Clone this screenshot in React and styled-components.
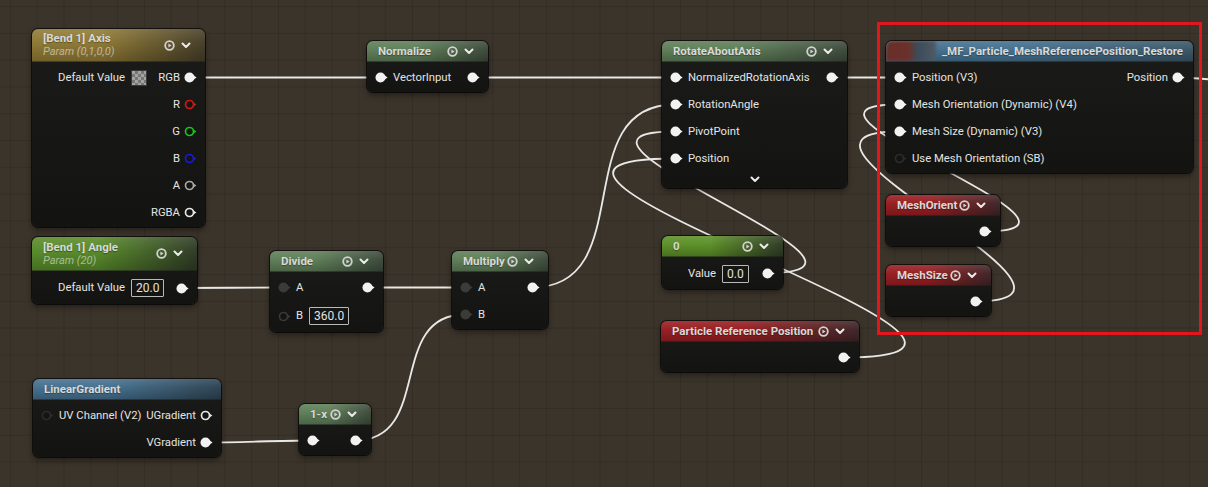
import React from 'react';
import styled, { createGlobalStyle } from 'styled-components';

const GlobalStyle = createGlobalStyle`
  html, body { margin: 0; padding: 0; background: #3b342b; }
  body { font-family: Roboto, "Noto Sans", "Liberation Sans", sans-serif; overflow: hidden; }
`;

const tones = {
  gold: ['#8e7934', '#453d27'],
  param: ['#578a29', '#2e3a25'],
  blue: ['#45708f', '#2d4352'],
  math: ['#5e7e58', '#3d4a3b'],
  constant: ['#5b8f27', '#2f3b24'],
  red: ['#981d21', '#3e2527'],
  mf: ['#44708f', '#3a5668'],
};

const Canvas = styled.div`
  position: relative;
  width: 1208px;
  height: 487px;
  overflow: hidden;
  background-color: #3b342b;
  background-image:
    linear-gradient(to right, rgba(0, 0, 0, 0.12) 1px, transparent 1px),
    linear-gradient(to bottom, rgba(0, 0, 0, 0.12) 1px, transparent 1px);
  background-size: 26.8px 26.8px;
  background-position: 10px 6px;
`;

const WireLayer = styled.svg`
  position: absolute;
  left: 0;
  top: 0;
  width: 1208px;
  height: 487px;
  z-index: 0;
`;

const Node = styled.div`
  position: absolute;
  left: ${(p) => p.$x}px;
  top: ${(p) => p.$y}px;
  width: ${(p) => p.$w}px;
  z-index: 1;
  border-radius: 6px;
  background: linear-gradient(180deg, #1b1b19 0%, #131311 100%);
  box-shadow: 0 0 0 1px rgba(0, 0, 0, 0.65), 0 3px 6px rgba(0, 0, 0, 0.45);
`;

const Header = styled.div`
  display: flex;
  align-items: center;
  gap: 6px;
  box-sizing: border-box;
  height: ${(p) => p.$h || 21}px;
  padding: 0 14px 0 ${(p) => (p.$flush ? 0 : 11)}px;
  border-radius: 6px 6px 0 0;
  overflow: hidden;
  border-bottom: 1px solid rgba(0, 0, 0, 0.55);
  background:
    linear-gradient(180deg, rgba(255, 255, 255, 0.12) 0%, rgba(255, 255, 255, 0.02) 40%, rgba(0, 0, 0, 0.2) 100%),
    linear-gradient(90deg, ${(p) => tones[p.$tone][0]} 0%, ${(p) => tones[p.$tone][0]} 40%, ${(p) => tones[p.$tone][1]} 100%);
`;

const TitleBlock = styled.div`
  flex: 1;
  min-width: 0;
  display: flex;
  flex-direction: column;
`;

const Title = styled.div`
  font-size: 11.5px;
  font-weight: 700;
  line-height: 14px;
  color: #d9d9d6;
  white-space: nowrap;
  text-shadow: 0 1px 1px rgba(0, 0, 0, 0.35);
`;

const Subtitle = styled.div`
  font-size: 11px;
  font-style: italic;
  line-height: 14px;
  color: rgba(255, 255, 255, 0.5);
  white-space: nowrap;
`;

const Thumb = styled.div`
  width: 50px;
  height: 20px;
  flex: none;
  border-radius: 6px 0 0 0;
  background: linear-gradient(90deg, #6a2e28 0%, #6c302a 45%, #3c4b58 62%, #4e5a66 100%);
  filter: blur(1.5px);
`;

const Icons = styled.div`
  display: flex;
  align-items: center;
  gap: 6px;
  flex: none;
`;

const Body = styled.div`
  padding: 2px 0 1px;
`;

const Row = styled.div`
  display: flex;
  align-items: center;
  height: ${(p) => p.$h || 27}px;
  padding: 0 8px 0 8px;
`;

const InSide = styled.div`
  display: flex;
  align-items: center;
  gap: 5px;
`;

const OutSide = styled.div`
  display: flex;
  align-items: center;
  gap: 4px;
  margin-left: auto;
`;

const Label = styled.span`
  font-size: 11.3px;
  line-height: 1;
  color: #e4e4e2;
  white-space: nowrap;
`;

const ValueBox = styled.span`
  display: inline-flex;
  align-items: center;
  height: 16px;
  padding: 0 4px;
  margin-left: 1px;
  border: 1px solid #b9b9b6;
  border-radius: 1px;
  font-size: 12px;
  color: #e2e2e0;
`;

const Checker = styled.span`
  display: inline-block;
  width: 14px;
  height: 14px;
  margin-left: 1px;
  border: 1px solid #3a3a3a;
  background-color: #a3a3a3;
  background-image:
    linear-gradient(45deg, #777 25%, transparent 25%, transparent 75%, #777 75%),
    linear-gradient(45deg, #777 25%, transparent 25%, transparent 75%, #777 75%);
  background-size: 6px 6px;
  background-position: 0 0, 3px 3px;
`;

const Footer = styled.div`
  display: flex;
  align-items: center;
  justify-content: center;
  height: 15px;
`;

const Highlight = styled.div`
  position: absolute;
  left: 877px;
  top: 22px;
  width: 325px;
  height: 313px;
  box-sizing: border-box;
  border: 3px solid #e2161c;
  z-index: 2;
  pointer-events: none;
`;

const Pin = ({ kind = 'filled', color = '#f2f2f2' }) => {
  if (kind === 'ghost') return <svg width="13" height="11" />;
  if (kind === 'filled' || kind === 'dim') {
    const c = kind === 'dim' ? '#3b3b3a' : color;
    return (
      <svg width="13" height="11" viewBox="0 0 13 11">
        <circle cx="5.5" cy="5.5" r="5" fill={c} />
        <polygon points="9,3 12.6,5.5 9,8" fill={c} />
      </svg>
    );
  }
  return (
    <svg width="13" height="11" viewBox="0 0 13 11">
      <circle cx="5.5" cy="5.5" r="4" fill="#141412" stroke={color} strokeWidth="1.7" />
      <polygon points="9.2,3.2 12.4,5.5 9.2,7.8" fill={color} />
    </svg>
  );
};

const PlayIcon = () => (
  <svg width="11" height="11" viewBox="0 0 11 11">
    <circle cx="5.5" cy="5.5" r="4.3" fill="none" stroke="#d2d2d0" strokeWidth="1.8" />
    <polygon points="4.4,3.5 7.6,5.5 4.4,7.5" fill="#d2d2d0" />
  </svg>
);

const Chevron = () => (
  <svg width="10" height="7" viewBox="0 0 10 7">
    <polyline points="1.5,1.5 5,5 8.5,1.5" fill="none" stroke="#ebebe9" strokeWidth="2" strokeLinecap="round" strokeLinejoin="round" />
  </svg>
);

const HeaderIcons = () => (
  <Icons>
    <PlayIcon />
    <Chevron />
  </Icons>
);

function wirePath([sx, sy], [ex, ey]) {
  const dx = ex - sx;
  const dy = ey - sy;
  const fwd = dx >= 0;
  const t = fwd
    ? Math.min(Math.abs(dx), 1000) + Math.min(Math.abs(dy), 1000)
    : Math.min(Math.abs(dx), 200) * 3 + Math.min(Math.abs(dy), 200) * 1.5;
  const c = t / 3;
  return `M${sx},${sy} C${sx + c},${sy} ${ex - c},${ey} ${ex},${ey}`;
}

const wires = [
  [[189, 77.5], [380, 77.5]],
  [[472, 77.5], [675, 77.5]],
  [[831, 77.5], [899, 77.5]],
  [[1177, 77.5], [1250, 82]],
  [[181, 288], [283, 287.5]],
  [[367, 287.5], [465, 287.5]],
  [[532, 287.5], [675, 104.5]],
  [[205, 442.5], [312, 440.5]],
  [[355, 440.5], [465, 314.5]],
  [[767, 273], [675, 131.5]],
  [[843, 357.5], [675, 158.5]],
  [[984, 231.5], [899, 104.5]],
  [[975, 301.5], [899, 131.5]],
];

export default function App() {
  return (
    <>
      <GlobalStyle />
      <Canvas>
        <WireLayer viewBox="0 0 1208 487">
          {wires.map((w, i) => (
            <path key={i} d={wirePath(w[0], w[1])} fill="none" stroke="#e8e8e6" strokeWidth="1.8" />
          ))}
        </WireLayer>

        {/* [Bend 1] Axis */}
        <Node $x={32} $y={29} $w={173}>
          <Header $tone="gold" $h={33}>
            <TitleBlock>
              <Title>[Bend 1] Axis</Title>
              <Subtitle>Param (0,1,0,0)</Subtitle>
            </TitleBlock>
            <HeaderIcons />
          </Header>
          <Body>
            <Row>
              <InSide>
                <Pin kind="ghost" />
                <Label>Default Value</Label>
                <Checker />
              </InSide>
              <OutSide>
                <Label>RGB</Label>
                <Pin />
              </OutSide>
            </Row>
            <Row>
              <OutSide>
                <Label>R</Label>
                <Pin kind="ring" color="#d81616" />
              </OutSide>
            </Row>
            <Row>
              <OutSide>
                <Label>G</Label>
                <Pin kind="ring" color="#18c418" />
              </OutSide>
            </Row>
            <Row>
              <OutSide>
                <Label>B</Label>
                <Pin kind="ring" color="#1a1ad8" />
              </OutSide>
            </Row>
            <Row>
              <OutSide>
                <Label>A</Label>
                <Pin kind="ring" color="#a8a8a6" />
              </OutSide>
            </Row>
            <Row>
              <OutSide>
                <Label>RGBA</Label>
                <Pin kind="ring" color="#e6e6e4" />
              </OutSide>
            </Row>
          </Body>
        </Node>

        {/* [Bend 1] Angle */}
        <Node $x={32} $y={237} $w={165}>
          <Header $tone="param" $h={34}>
            <TitleBlock>
              <Title>[Bend 1] Angle</Title>
              <Subtitle>Param (20)</Subtitle>
            </TitleBlock>
            <HeaderIcons />
          </Header>
          <Body>
            <Row $h={30}>
              <InSide>
                <Pin kind="ghost" />
                <Label>Default Value</Label>
                <ValueBox>20.0</ValueBox>
              </InSide>
              <OutSide>
                <Pin />
              </OutSide>
            </Row>
          </Body>
        </Node>

        {/* LinearGradient */}
        <Node $x={33} $y={379} $w={188}>
          <Header $tone="blue">
            <TitleBlock>
              <Title>LinearGradient</Title>
            </TitleBlock>
          </Header>
          <Body>
            <Row>
              <InSide>
                <Pin kind="ring" color="#2c2c2b" />
                <Label>UV Channel (V2)</Label>
              </InSide>
              <OutSide>
                <Label>UGradient</Label>
                <Pin kind="ring" color="#e6e6e4" />
              </OutSide>
            </Row>
            <Row>
              <OutSide>
                <Label>VGradient</Label>
                <Pin />
              </OutSide>
            </Row>
          </Body>
        </Node>

        {/* Normalize */}
        <Node $x={367} $y={41} $w={121}>
          <Header $tone="math">
            <TitleBlock>
              <Title>Normalize</Title>
            </TitleBlock>
            <HeaderIcons />
          </Header>
          <Body>
            <Row>
              <InSide>
                <Pin />
                <Label>VectorInput</Label>
              </InSide>
              <OutSide>
                <Pin />
              </OutSide>
            </Row>
          </Body>
        </Node>

        {/* Divide */}
        <Node $x={270} $y={251} $w={113}>
          <Header $tone="math">
            <TitleBlock>
              <Title>Divide</Title>
            </TitleBlock>
            <HeaderIcons />
          </Header>
          <Body>
            <Row>
              <InSide>
                <Pin kind="dim" />
                <Label>A</Label>
              </InSide>
              <OutSide>
                <Pin />
              </OutSide>
            </Row>
            <Row $h={30}>
              <InSide>
                <Pin kind="ring" color="#3a3a39" />
                <Label>B</Label>
                <ValueBox>360.0</ValueBox>
              </InSide>
            </Row>
          </Body>
        </Node>

        {/* Multiply */}
        <Node $x={452} $y={251} $w={96}>
          <Header $tone="math">
            <TitleBlock>
              <Title>Multiply</Title>
            </TitleBlock>
            <HeaderIcons />
          </Header>
          <Body>
            <Row>
              <InSide>
                <Pin kind="dim" />
                <Label>A</Label>
              </InSide>
              <OutSide>
                <Pin />
              </OutSide>
            </Row>
            <Row>
              <InSide>
                <Pin kind="dim" />
                <Label>B</Label>
              </InSide>
            </Row>
          </Body>
        </Node>

        {/* 1-x */}
        <Node $x={299} $y={404} $w={72}>
          <Header $tone="math">
            <TitleBlock>
              <Title>1-x</Title>
            </TitleBlock>
            <HeaderIcons />
          </Header>
          <Body>
            <Row>
              <InSide>
                <Pin />
              </InSide>
              <OutSide>
                <Pin />
              </OutSide>
            </Row>
          </Body>
        </Node>

        {/* RotateAboutAxis */}
        <Node $x={662} $y={41} $w={185}>
          <Header $tone="math">
            <TitleBlock>
              <Title>RotateAboutAxis</Title>
            </TitleBlock>
            <HeaderIcons />
          </Header>
          <Body>
            <Row>
              <InSide>
                <Pin />
                <Label>NormalizedRotationAxis</Label>
              </InSide>
              <OutSide>
                <Pin />
              </OutSide>
            </Row>
            <Row>
              <InSide>
                <Pin />
                <Label>RotationAngle</Label>
              </InSide>
            </Row>
            <Row>
              <InSide>
                <Pin />
                <Label>PivotPoint</Label>
              </InSide>
            </Row>
            <Row>
              <InSide>
                <Pin />
                <Label>Position</Label>
              </InSide>
            </Row>
            <Footer>
              <Chevron />
            </Footer>
          </Body>
        </Node>

        {/* Constant 0 */}
        <Node $x={662} $y={236} $w={121}>
          <Header $tone="constant">
            <TitleBlock>
              <Title>0</Title>
            </TitleBlock>
            <HeaderIcons />
          </Header>
          <Body>
            <Row $h={29}>
              <InSide>
                <Pin kind="ghost" />
                <Label>Value</Label>
                <ValueBox>0.0</ValueBox>
              </InSide>
              <OutSide>
                <Pin />
              </OutSide>
            </Row>
          </Body>
        </Node>

        {/* Particle Reference Position */}
        <Node $x={661} $y={321} $w={198}>
          <Header $tone="red">
            <TitleBlock>
              <Title>Particle Reference Position</Title>
            </TitleBlock>
            <HeaderIcons />
          </Header>
          <Body>
            <Row>
              <OutSide>
                <Pin />
              </OutSide>
            </Row>
          </Body>
        </Node>

        {/* Material function */}
        <Node $x={886} $y={41} $w={307}>
          <Header $tone="mf" $flush>
            <Thumb />
            <TitleBlock>
              <Title>_MF_Particle_MeshReferencePosition_Restore</Title>
            </TitleBlock>
          </Header>
          <Body>
            <Row>
              <InSide>
                <Pin />
                <Label>Position (V3)</Label>
              </InSide>
              <OutSide>
                <Label>Position</Label>
                <Pin />
              </OutSide>
            </Row>
            <Row>
              <InSide>
                <Pin />
                <Label>Mesh Orientation (Dynamic) (V4)</Label>
              </InSide>
            </Row>
            <Row>
              <InSide>
                <Pin />
                <Label>Mesh Size (Dynamic) (V3)</Label>
              </InSide>
            </Row>
            <Row>
              <InSide>
                <Pin kind="ring" color="#2c2c2b" />
                <Label>Use Mesh Orientation (SB)</Label>
              </InSide>
            </Row>
          </Body>
        </Node>

        {/* MeshOrient */}
        <Node $x={886} $y={195} $w={114}>
          <Header $tone="red">
            <TitleBlock>
              <Title>MeshOrient</Title>
            </TitleBlock>
            <HeaderIcons />
          </Header>
          <Body>
            <Row>
              <OutSide>
                <Pin />
              </OutSide>
            </Row>
          </Body>
        </Node>

        {/* MeshSize */}
        <Node $x={886} $y={265} $w={105}>
          <Header $tone="red">
            <TitleBlock>
              <Title>MeshSize</Title>
            </TitleBlock>
            <HeaderIcons />
          </Header>
          <Body>
            <Row>
              <OutSide>
                <Pin />
              </OutSide>
            </Row>
          </Body>
        </Node>

        <Highlight />
      </Canvas>
    </>
  );
}
